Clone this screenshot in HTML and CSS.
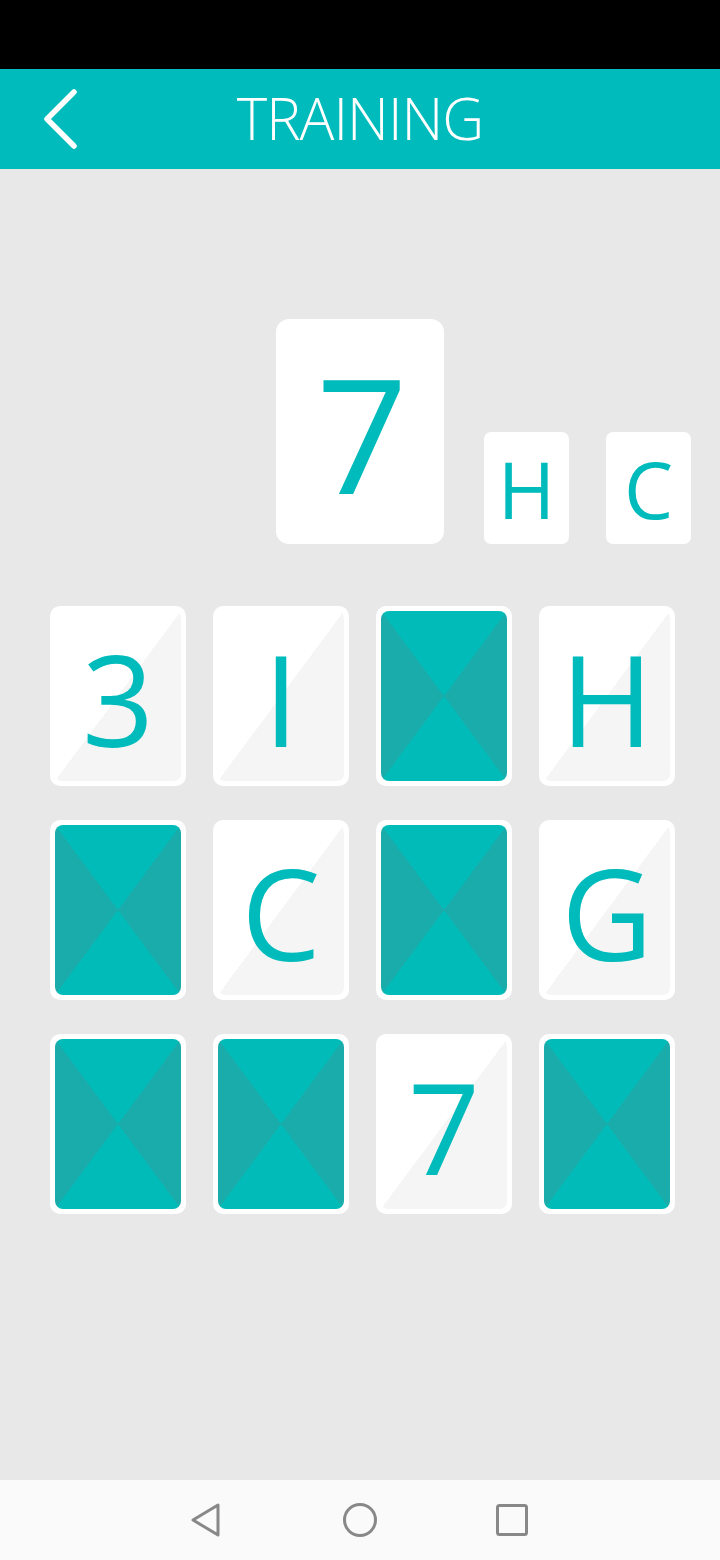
FILE: index.html
```html
<!DOCTYPE html>
<html>
<head>
<meta charset="utf-8">
<link rel="stylesheet" href="styles.css">
</head>
<body>
<div class="screen">
  <div class="status"></div>
  <header class="header">
    <div class="back">
      <svg width="40" height="60" viewBox="0 0 40 60"><polyline points="32,3 5,30 32,57" fill="none" stroke="#fff" stroke-width="5.5" stroke-linecap="round" stroke-linejoin="round"/></svg>
    </div>
    <h1 class="title">TRAINING</h1>
    <div></div>
  </header>
  <main class="main">
    <div class="target">
      <div class="big-card">7</div>
      <div class="small-card">H</div>
      <div class="small-card">C</div>
    </div>
    <div class="grid">
      <div class="card up"><div class="face">3</div></div>
      <div class="card up"><div class="face">I</div></div>
      <div class="card down"><div class="back-face"></div></div>
      <div class="card up"><div class="face">H</div></div>
      <div class="card down"><div class="back-face"></div></div>
      <div class="card up"><div class="face">C</div></div>
      <div class="card down"><div class="back-face"></div></div>
      <div class="card up"><div class="face">G</div></div>
      <div class="card down"><div class="back-face"></div></div>
      <div class="card down"><div class="back-face"></div></div>
      <div class="card up"><div class="face">7</div></div>
      <div class="card down"><div class="back-face"></div></div>
    </div>
  </main>
  <nav class="navbar">
    <div class="nav-btn"><svg width="40" height="40" viewBox="0 0 40 40"><path d="M30 5 L30 35 L5 20 Z" fill="none" stroke="#888" stroke-width="3" stroke-linejoin="round"/></svg></div>
    <div class="nav-btn"><svg width="40" height="40" viewBox="0 0 40 40"><circle cx="20" cy="20" r="15.5" fill="none" stroke="#888" stroke-width="3"/></svg></div>
    <div class="nav-btn"><svg width="40" height="40" viewBox="0 0 40 40"><rect x="5.5" y="5.5" width="29" height="29" rx="2" fill="none" stroke="#888" stroke-width="3"/></svg></div>
  </nav>
</div>
</body>
</html>
```
FILE: styles.css
```css
* { box-sizing: border-box; }
html, body { margin: 0; padding: 0; }
body {
  font-family: "Open Sans", "Liberation Sans", sans-serif;
  background: #e8e8e8;
}
.screen {
  width: 720px;
  height: 1560px;
  display: flex;
  flex-direction: column;
  background: #e8e8e8;
}
.status { height: 69px; background: #000; }
.header {
  height: 100px;
  background: #00bbbb;
  display: grid;
  grid-template-columns: 1fr auto 1fr;
  align-items: center;
}
.back { padding-left: 42px; display: flex; align-items: center; }
.back svg { display: block; }
.title {
  margin: 0;
  color: #fff;
  font-weight: 300;
  font-size: 58px;
  line-height: 1;
  letter-spacing: -1px;
  padding-bottom: 2px;
}
.main { flex: 1; padding-top: 150px; }
.target {
  display: flex;
  align-items: flex-end;
  padding-left: 276px;
}
.big-card {
  flex: none;
  width: 168px;
  height: 225px;
  background: #fff;
  border-radius: 13px;
  color: #00bbbb;
  font-size: 160px;
  display: flex;
  align-items: center;
  justify-content: center;
  line-height: 1;
  padding-left: 4px;
  margin-right: 40px;
}
.small-card {
  flex: none;
  width: 85px;
  height: 112px;
  background: #fff;
  border-radius: 7px;
  color: #00bbbb;
  font-size: 78px;
  display: flex;
  align-items: center;
  justify-content: center;
  line-height: 1;
  padding-top: 2px;
}
.small-card + .small-card { margin-left: 37px; }
.grid {
  margin-top: 62px;
  padding-left: 50px;
  display: grid;
  grid-template-columns: repeat(4, 136px);
  grid-auto-rows: 180px;
  column-gap: 27px;
  row-gap: 34px;
}
.card {
  background: #fff;
  border-radius: 10px;
  padding: 5px;
}
.face {
  width: 100%;
  height: 100%;
  border-radius: 7px;
  background: linear-gradient(to bottom right, #ffffff 50%, #f5f5f5 50%);
  color: #00bbbb;
  font-size: 126px;
  line-height: 1;
  display: flex;
  align-items: center;
  justify-content: center;
  padding-top: 4px;
}
.back-face {
  width: 100%;
  height: 100%;
  border-radius: 8px;
  background: conic-gradient(#00bbb8 0deg 36.5deg, #1aacaa 36.5deg 143.5deg, #00bbb8 143.5deg 216.5deg, #1aacaa 216.5deg 323.5deg, #00bbb8 323.5deg 360deg);
}
.navbar {
  height: 80px;
  background: #fafafa;
  display: flex;
  justify-content: center;
  align-items: center;
  gap: 112px;
}
.nav-btn { width: 40px; height: 40px; }
.nav-btn svg { display: block; }
```
